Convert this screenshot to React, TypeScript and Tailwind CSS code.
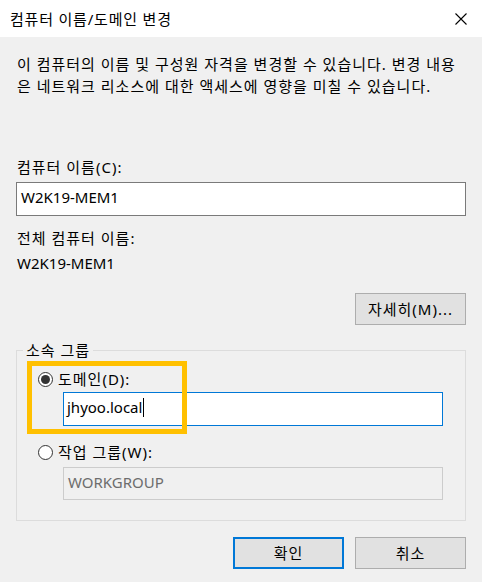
import React from "react";

const font = { fontFamily: "'Noto Sans', 'Noto Sans CJK KR', sans-serif" };

const Radio = ({ checked }: { checked?: boolean }) => (
  <span className="flex h-[15px] w-[15px] items-center justify-center rounded-full border border-[#333333] bg-white">
    {checked && <span className="h-[9px] w-[9px] rounded-full bg-[#333333]" />}
  </span>
);

const Btn = ({ children, primary }: { children: React.ReactNode; primary?: boolean }) => (
  <button
    className={
      primary
        ? "flex h-[32px] w-[111px] items-center justify-center border-2 border-[#0078d7] bg-[#e1e1e1] text-[15px] tracking-[1px] text-black"
        : "flex h-[32px] w-[111px] items-center justify-center border border-[#adadad] bg-[#e1e1e1] text-[15px] tracking-[1px] text-black"
    }
  >
    {children}
  </button>
);

export default function App() {
  return (
    <div className="h-[582px] w-[482px] overflow-hidden bg-[#f0f0f0] text-[15px] leading-[22px] text-black" style={font}>
      <div className="flex h-[37px] items-center justify-between bg-white pl-[10px] pr-[15px]">
        <span className="tracking-[0.8px]">컴퓨터 이름/도메인 변경</span>
        <svg width="12" height="12" viewBox="0 0 12 12">
          <path d="M0.5 0.5 L11.5 11.5 M11.5 0.5 L0.5 11.5" stroke="#000" strokeWidth="1.1" />
        </svg>
      </div>

      <div className="px-[16px]">
        <p className="mt-[16px] pl-[1px] tracking-[1px]">
          이 컴퓨터의 이름 및 구성원 자격을 변경할 수 있습니다. 변경 내용
          <br />은 네트워크 리소스에 대한 액세스에 영향을 미칠 수 있습니다.
        </p>

        <div className="mt-[59px] pl-[1px] tracking-[1px]">컴퓨터 이름(C):</div>
        <div className="mt-[4px] flex h-[34px] items-start border border-[#7a7a7a] bg-white px-[4px] pt-[3px]">
          W2K19-MEM1
        </div>

        <div className="mt-[11px] pl-[1px] tracking-[1px]">전체 컴퓨터 이름:</div>
        <div className="mt-[3px] pl-[1px]">W2K19-MEM1</div>

        <div className="mt-[19px] flex justify-end">
          <Btn>자세히(M)...</Btn>
        </div>

        <div className="relative mt-[25px] h-[171px] border border-[#dcdcdc]">
          <span className="absolute left-[6px] top-[-12px] bg-[#f0f0f0] px-[3px] tracking-[1px]">소속 그룹</span>

          <div className="mt-[17px] flex items-center gap-[5px] pl-[21px]">
            <Radio checked />
            <span className="tracking-[1px]">도메인(D):</span>
          </div>
          <div className="ml-[46px] mt-[2px] flex h-[34px] w-[380px] items-start border border-[#0078d7] bg-white px-[3px] pt-[3px]">
            jhyoo.local
            <span className="ml-[1px] mt-[2px] h-[19px] w-[1px] bg-black" />
          </div>

          <div className="mt-[15px] flex items-center gap-[5px] pl-[21px]">
            <Radio />
            <span className="tracking-[1px]">작업 그룹(W):</span>
          </div>
          <div className="ml-[46px] mt-[4px] flex h-[33px] w-[380px] items-start border border-[#cccccc] bg-[#f0f0f0] px-[4px] pt-[3px] text-[#6d6d6d]">
            WORKGROUP
          </div>

          <div className="pointer-events-none absolute left-[10px] top-[10px] h-[73px] w-[160px] border-[5px] border-[#ffc000]" />
        </div>

        <div className="mt-[16px] flex justify-end gap-[11px]">
          <Btn primary>확인</Btn>
          <Btn>취소</Btn>
        </div>
      </div>
    </div>
  );
}
